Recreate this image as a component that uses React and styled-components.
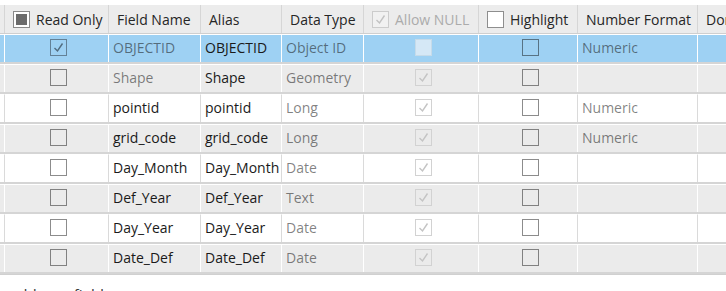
import React from 'react';
import styled, { createGlobalStyle } from 'styled-components';

const GlobalStyle = createGlobalStyle`
  html, body {
    margin: 0;
    padding: 0;
    background: #ffffff;
    font-family: "Open Sans", "Noto Sans", sans-serif;
  }
`;

const columns = [
  { key: 'stub', width: 5 },
  { key: 'readOnly', width: 104, label: 'Read Only', box: 'mixed' },
  { key: 'name', width: 92, label: 'Field Name' },
  { key: 'alias', width: 81, label: 'Alias' },
  { key: 'type', width: 82, label: 'Data Type' },
  { key: 'allowNull', width: 115, label: 'Allow NULL', box: 'disabled' },
  { key: 'highlight', width: 99, label: 'Highlight', box: 'empty' },
  { key: 'format', width: 120, label: 'Number Format' },
  { key: 'domain', width: 120, label: 'Domain' },
];

const fields = [
  { name: 'OBJECTID', alias: 'OBJECTID', type: 'Object ID', readOnly: true, nameDim: true, nullBox: 'blank', format: 'Numeric' },
  { name: 'Shape', alias: 'Shape', type: 'Geometry', nameDim: true, format: '' },
  { name: 'pointid', alias: 'pointid', type: 'Long', format: 'Numeric' },
  { name: 'grid_code', alias: 'grid_code', type: 'Long', format: 'Numeric' },
  { name: 'Day_Month', alias: 'Day_Month', type: 'Date', format: '' },
  { name: 'Def_Year', alias: 'Def_Year', type: 'Text', format: '' },
  { name: 'Day_Year', alias: 'Day_Year', type: 'Date', format: '' },
  { name: 'Date_Def', alias: 'Date_Def', type: 'Date', format: '' },
];

const Check = ({ color }) => (
  <svg width="13" height="13" viewBox="0 0 13 13">
    <polyline points="2.5,7 5.5,10 10.5,2.5" fill="none" stroke={color} strokeWidth="1.4" />
  </svg>
);

const CheckBox = ({ kind }) => {
  if (kind === 'checked') {
    return <Box $border="rgba(40,50,60,0.5)"><Check color="rgba(30,40,50,0.6)" /></Box>;
  }
  if (kind === 'nullChecked') {
    return <Box $border="#d2d2d2"><Check color="#c4c4c4" /></Box>;
  }
  if (kind === 'blank') {
    return <Box $border="#c6dbe9" $fill="#d5e8f6" />;
  }
  return <Box $border="rgba(0,0,0,0.45)" />;
};

const HeaderBox = ({ kind }) => {
  if (kind === 'mixed') {
    return <Box $border="#8a8a8a" $fill="#ffffff"><Mixed /></Box>;
  }
  if (kind === 'disabled') {
    return <Box $border="#cccccc" $fill="#f1f1f1"><Check color="#c2c2c2" /></Box>;
  }
  return <Box $border="#8e8e8e" $fill="#ffffff" />;
};

const App = () => {
  return (
    <>
      <GlobalStyle />
      <Page>
        <Grid>
          <HeaderRow>
            {columns.map((col) => (
              <HeaderCell key={col.key} style={{ width: col.width }} $dim={col.box === 'disabled'}>
                {col.box && <HeaderBox kind={col.box} />}
                {col.label}
              </HeaderCell>
            ))}
          </HeaderRow>
          {fields.map((f, i) => {
            const tone = i === 0 ? 'selected' : i % 2 === 1 ? 'grey' : 'white';
            return (
              <Row key={f.name}>
                <Cell $tone={tone} style={{ width: 5 }} />
                <Cell $tone={tone} $center style={{ width: 104 }}>
                  <CheckBox kind={f.readOnly ? 'checked' : 'empty'} />
                </Cell>
                <Cell $tone={tone} $dim={f.nameDim} style={{ width: 92 }}>{f.name}</Cell>
                <Cell $tone={tone} style={{ width: 81 }}>{f.alias}</Cell>
                <Cell $tone={tone} $dim style={{ width: 82 }}>{f.type}</Cell>
                <Cell $tone={tone} $center style={{ width: 115 }}>
                  <CheckBox kind={f.nullBox || 'nullChecked'} />
                </Cell>
                <Cell $tone={tone} $center style={{ width: 99 }}>
                  <CheckBox kind="empty" />
                </Cell>
                <Cell $tone={tone} $dim style={{ width: 120 }}>{f.format}</Cell>
                <Cell $tone={tone} style={{ width: 120 }} />
              </Row>
            );
          })}
        </Grid>
        <Footer>add new field</Footer>
      </Page>
    </>
  );
};

export default App;

const Page = styled.div`
  width: 726px;
  height: 291px;
  overflow: hidden;
  padding-top: 5px;
  box-sizing: border-box;
`;

const Grid = styled.div`
  display: flex;
  flex-direction: column;
  border-bottom: 1px solid #d0d0d0;
`;

const HeaderRow = styled.div`
  display: flex;
  height: 29px;
  background: #ececec;
  border-bottom: 1px solid #cfcfcf;
  box-sizing: border-box;
`;

const HeaderCell = styled.div`
  flex: none;
  display: flex;
  align-items: center;
  gap: 6px;
  padding-left: 8px;
  box-sizing: border-box;
  border-right: 1px solid #d6d6d6;
  font-size: 14px;
  color: ${(p) => (p.$dim ? '#ababab' : '#262626')};
  white-space: nowrap;
  overflow: hidden;
  &:first-child {
    padding-left: 0;
  }
`;

const Row = styled.div`
  display: flex;
  height: 30px;
  border-bottom: 2px solid #d5d5d5;
  box-sizing: border-box;
`;

const toneColor = {
  selected: '#9ed1f3',
  grey: '#ebebeb',
  white: '#ffffff',
};

const Cell = styled.div`
  flex: none;
  display: flex;
  align-items: center;
  justify-content: ${(p) => (p.$center ? 'center' : 'flex-start')};
  padding: 0 0 2px 4px;
  box-sizing: border-box;
  background: ${(p) => toneColor[p.$tone]};
  border-right: 1px solid ${(p) => (p.$tone === 'white' ? '#dadada' : '#ffffff')};
  border-top: 1px solid #ffffff;
  font-size: 14px;
  color: ${(p) => (p.$dim ? 'rgba(20,20,20,0.55)' : '#1a1a1a')};
  white-space: nowrap;
  overflow: hidden;
`;

const Box = styled.span`
  flex: none;
  display: inline-flex;
  align-items: center;
  justify-content: center;
  width: 17px;
  height: 17px;
  box-sizing: border-box;
  border: 1px solid ${(p) => p.$border};
  background: ${(p) => p.$fill || 'transparent'};
`;

const Mixed = styled.span`
  width: 11px;
  height: 11px;
  background: #6b6b6b;
`;

const Footer = styled.div`
  padding: 9px 0 0 10px;
  font-size: 15px;
  color: #333333;
`;
